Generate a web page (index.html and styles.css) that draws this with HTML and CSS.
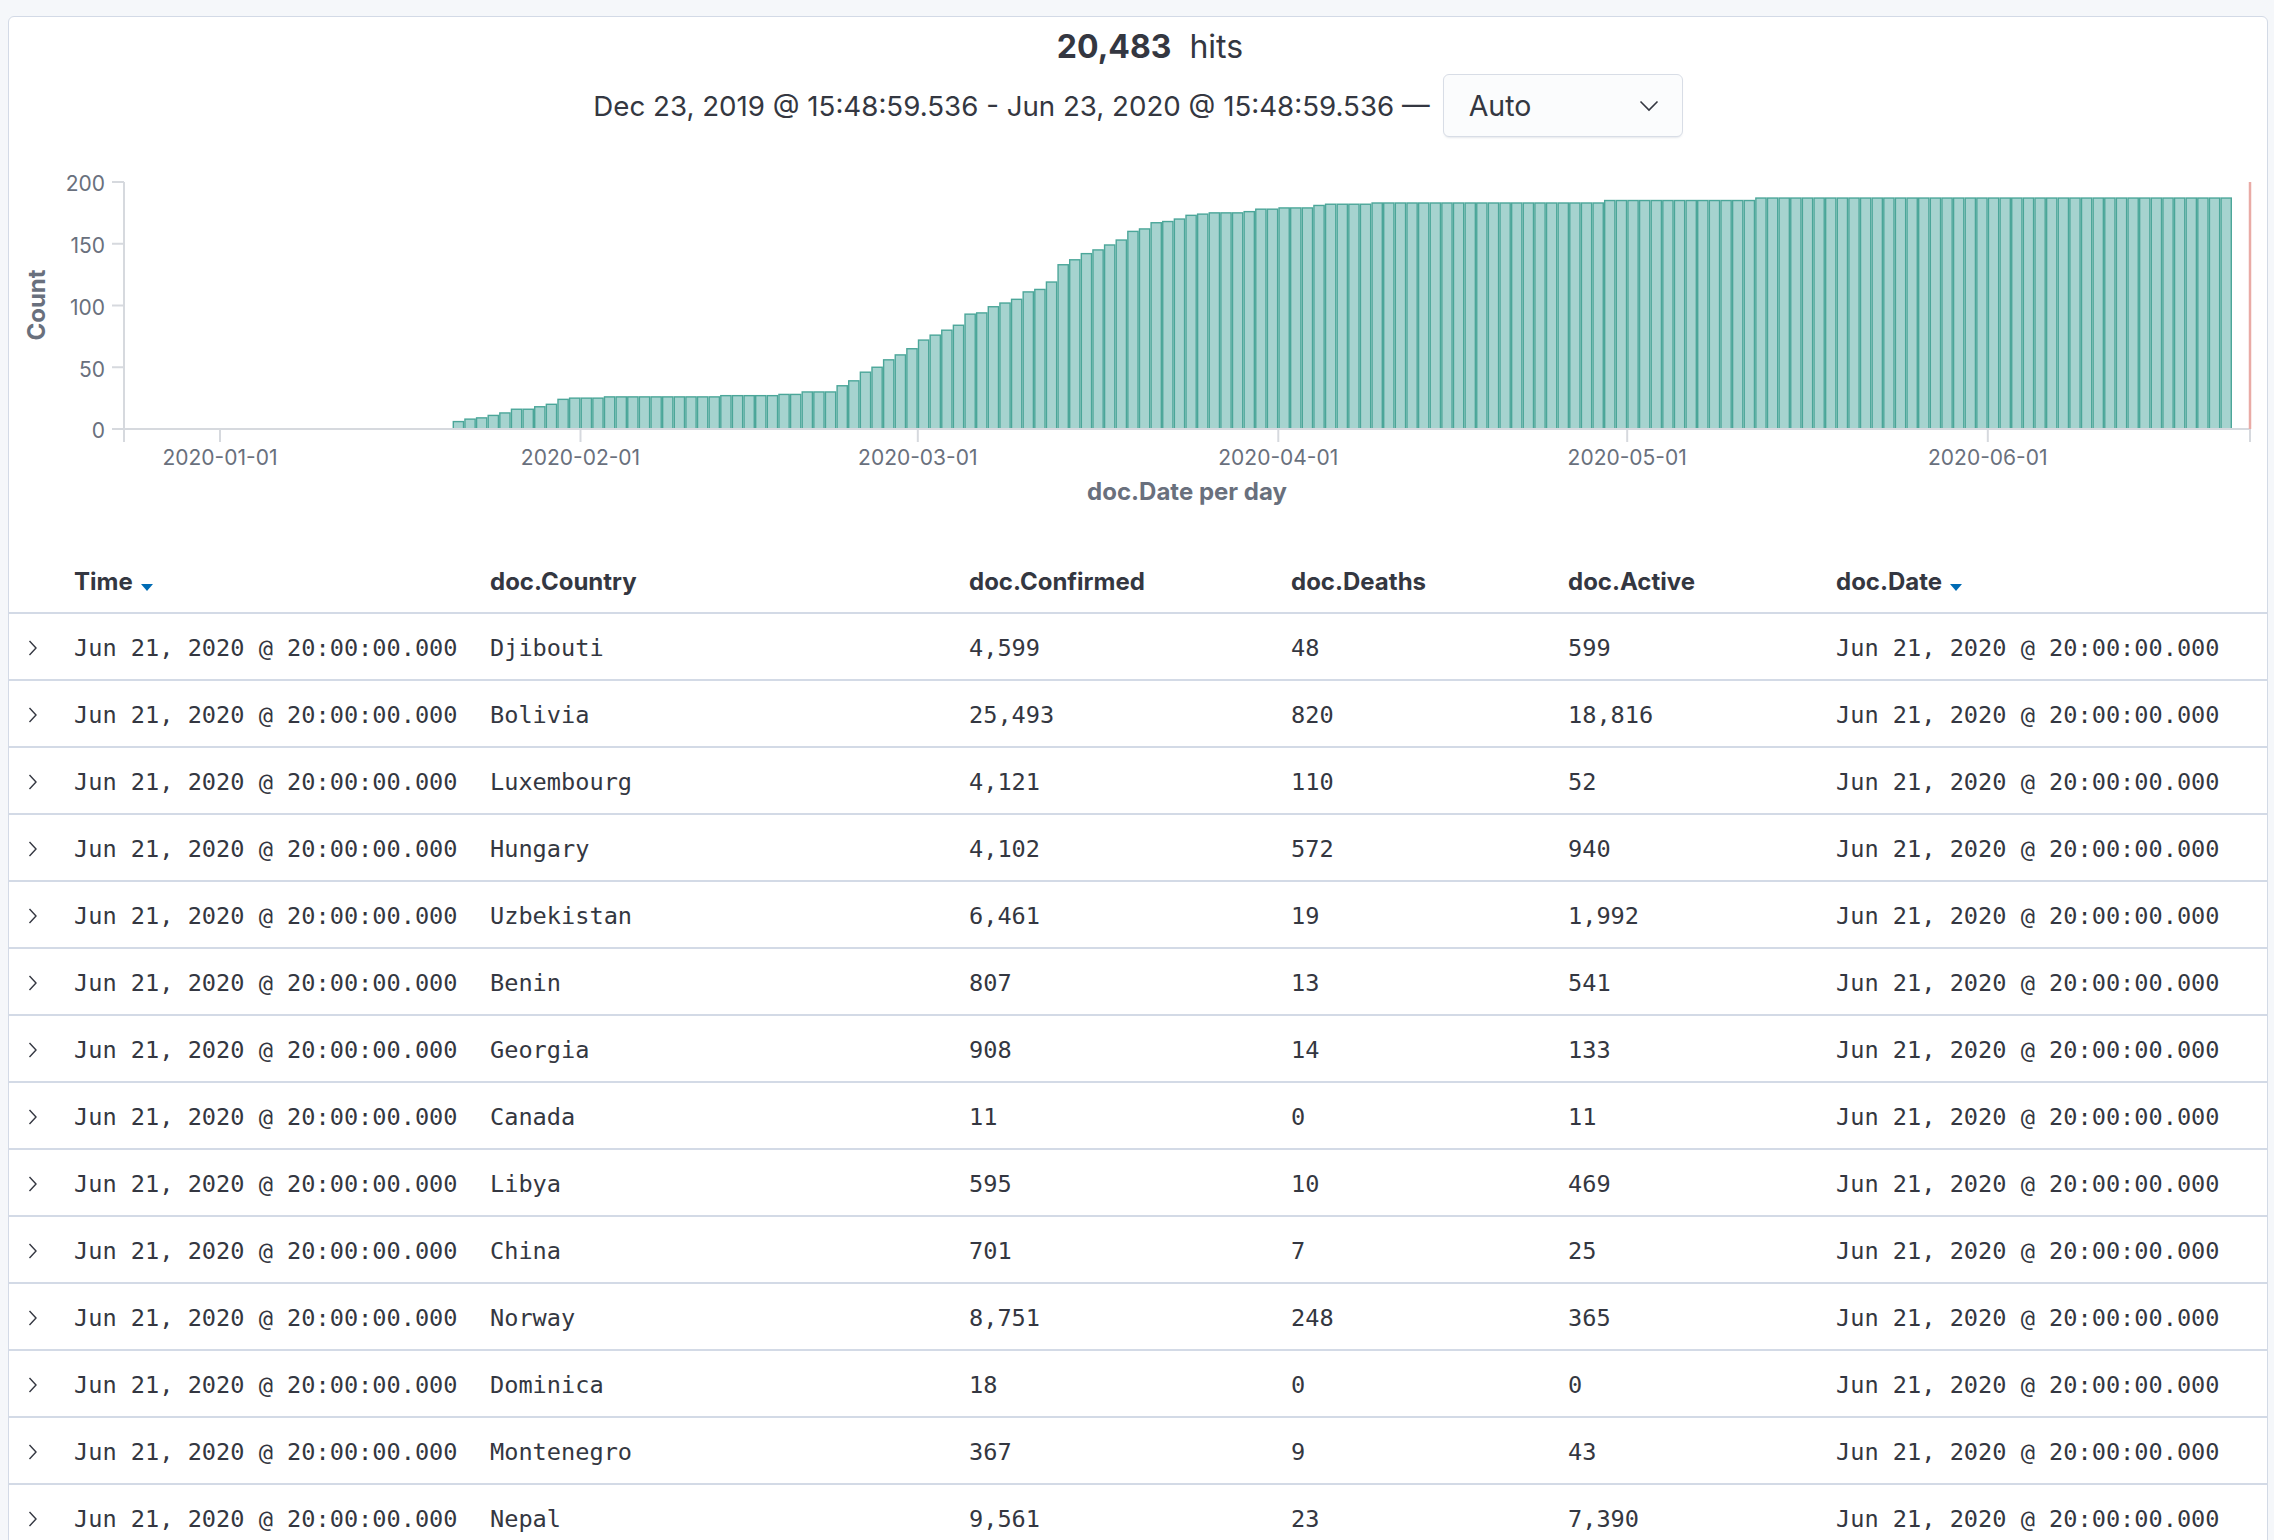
FILE: index.html
```html
<!DOCTYPE html>
<html>
<head>
<meta charset="utf-8">
<link rel="stylesheet" href="styles.css">
</head>
<body>
<div class="panel">
  <div class="hits"><strong class="hits-count">20,483</strong><span class="hits-label">hits</span></div>
  <div class="range">
    <span class="range-text">Dec 23, 2019 @ 15:48:59.536 - Jun 23, 2020 @ 15:48:59.536 —</span>
    <div class="select">
      <span class="select-value">Auto</span>
      <svg class="select-arrow" width="20" height="12" viewBox="0 0 20 12"><polyline points="1.5,1.5 10,10 18.5,1.5" fill="none" stroke="#343741" stroke-width="1.6"/></svg>
    </div>
  </div>
  <svg class="chart" width="2258" height="370" viewBox="9 150 2258 370">
    <g id="bars"></g>
    <g class="axis">
      <line x1="124" y1="182" x2="124" y2="442"/>
      <line x1="123" y1="429" x2="2251" y2="429"/>
      <line x1="112" y1="182" x2="124" y2="182"/>
      <line x1="112" y1="243.75" x2="124" y2="243.75"/>
      <line x1="112" y1="305.5" x2="124" y2="305.5"/>
      <line x1="112" y1="367.25" x2="124" y2="367.25"/>
      <line x1="112" y1="429" x2="124" y2="429"/>
      <line x1="220" y1="429" x2="220" y2="442"/>
      <line x1="580.5" y1="429" x2="580.5" y2="442"/>
      <line x1="917.8" y1="429" x2="917.8" y2="442"/>
      <line x1="1278.3" y1="429" x2="1278.3" y2="442"/>
      <line x1="1627.2" y1="429" x2="1627.2" y2="442"/>
      <line x1="1987.8" y1="429" x2="1987.8" y2="442"/>
      <line x1="2250" y1="429" x2="2250" y2="442"/>
    </g>
    <line class="now" x1="2250" y1="182" x2="2250" y2="429"/>
    <g class="ylabels">
      <text x="105" y="183">200</text>
      <text x="105" y="245">150</text>
      <text x="105" y="307">100</text>
      <text x="105" y="369">50</text>
      <text x="105" y="430.5">0</text>
    </g>
    <g class="xlabels">
      <text x="220" y="457">2020-01-01</text>
      <text x="580.5" y="457">2020-02-01</text>
      <text x="917.8" y="457">2020-03-01</text>
      <text x="1278.3" y="457">2020-04-01</text>
      <text x="1627.2" y="457">2020-05-01</text>
      <text x="1987.8" y="457">2020-06-01</text>
    </g>
    <text class="axis-title" x="36" y="305" transform="rotate(-90 36 305)">Count</text>
    <text class="axis-title" x="1187" y="491">doc.Date per day</text>
  </svg>
  <div class="table">
    <div class="row head">
      <div class="cell"></div>
      <div class="cell">Time<span class="sort"></span></div>
      <div class="cell">doc.Country</div>
      <div class="cell">doc.Confirmed</div>
      <div class="cell">doc.Deaths</div>
      <div class="cell">doc.Active</div>
      <div class="cell">doc.Date<span class="sort"></span></div>
    </div>
    <div class="row"><div class="cell toggle"><svg width="10" height="16" viewBox="0 0 10 16"><polyline points="1.5,1 8,8 1.5,15"/></svg></div><div class="cell">Jun 21, 2020 @ 20:00:00.000</div><div class="cell">Djibouti</div><div class="cell">4,599</div><div class="cell">48</div><div class="cell">599</div><div class="cell">Jun 21, 2020 @ 20:00:00.000</div></div>
    <div class="row"><div class="cell toggle"><svg width="10" height="16" viewBox="0 0 10 16"><polyline points="1.5,1 8,8 1.5,15"/></svg></div><div class="cell">Jun 21, 2020 @ 20:00:00.000</div><div class="cell">Bolivia</div><div class="cell">25,493</div><div class="cell">820</div><div class="cell">18,816</div><div class="cell">Jun 21, 2020 @ 20:00:00.000</div></div>
    <div class="row"><div class="cell toggle"><svg width="10" height="16" viewBox="0 0 10 16"><polyline points="1.5,1 8,8 1.5,15"/></svg></div><div class="cell">Jun 21, 2020 @ 20:00:00.000</div><div class="cell">Luxembourg</div><div class="cell">4,121</div><div class="cell">110</div><div class="cell">52</div><div class="cell">Jun 21, 2020 @ 20:00:00.000</div></div>
    <div class="row"><div class="cell toggle"><svg width="10" height="16" viewBox="0 0 10 16"><polyline points="1.5,1 8,8 1.5,15"/></svg></div><div class="cell">Jun 21, 2020 @ 20:00:00.000</div><div class="cell">Hungary</div><div class="cell">4,102</div><div class="cell">572</div><div class="cell">940</div><div class="cell">Jun 21, 2020 @ 20:00:00.000</div></div>
    <div class="row"><div class="cell toggle"><svg width="10" height="16" viewBox="0 0 10 16"><polyline points="1.5,1 8,8 1.5,15"/></svg></div><div class="cell">Jun 21, 2020 @ 20:00:00.000</div><div class="cell">Uzbekistan</div><div class="cell">6,461</div><div class="cell">19</div><div class="cell">1,992</div><div class="cell">Jun 21, 2020 @ 20:00:00.000</div></div>
    <div class="row"><div class="cell toggle"><svg width="10" height="16" viewBox="0 0 10 16"><polyline points="1.5,1 8,8 1.5,15"/></svg></div><div class="cell">Jun 21, 2020 @ 20:00:00.000</div><div class="cell">Benin</div><div class="cell">807</div><div class="cell">13</div><div class="cell">541</div><div class="cell">Jun 21, 2020 @ 20:00:00.000</div></div>
    <div class="row"><div class="cell toggle"><svg width="10" height="16" viewBox="0 0 10 16"><polyline points="1.5,1 8,8 1.5,15"/></svg></div><div class="cell">Jun 21, 2020 @ 20:00:00.000</div><div class="cell">Georgia</div><div class="cell">908</div><div class="cell">14</div><div class="cell">133</div><div class="cell">Jun 21, 2020 @ 20:00:00.000</div></div>
    <div class="row"><div class="cell toggle"><svg width="10" height="16" viewBox="0 0 10 16"><polyline points="1.5,1 8,8 1.5,15"/></svg></div><div class="cell">Jun 21, 2020 @ 20:00:00.000</div><div class="cell">Canada</div><div class="cell">11</div><div class="cell">0</div><div class="cell">11</div><div class="cell">Jun 21, 2020 @ 20:00:00.000</div></div>
    <div class="row"><div class="cell toggle"><svg width="10" height="16" viewBox="0 0 10 16"><polyline points="1.5,1 8,8 1.5,15"/></svg></div><div class="cell">Jun 21, 2020 @ 20:00:00.000</div><div class="cell">Libya</div><div class="cell">595</div><div class="cell">10</div><div class="cell">469</div><div class="cell">Jun 21, 2020 @ 20:00:00.000</div></div>
    <div class="row"><div class="cell toggle"><svg width="10" height="16" viewBox="0 0 10 16"><polyline points="1.5,1 8,8 1.5,15"/></svg></div><div class="cell">Jun 21, 2020 @ 20:00:00.000</div><div class="cell">China</div><div class="cell">701</div><div class="cell">7</div><div class="cell">25</div><div class="cell">Jun 21, 2020 @ 20:00:00.000</div></div>
    <div class="row"><div class="cell toggle"><svg width="10" height="16" viewBox="0 0 10 16"><polyline points="1.5,1 8,8 1.5,15"/></svg></div><div class="cell">Jun 21, 2020 @ 20:00:00.000</div><div class="cell">Norway</div><div class="cell">8,751</div><div class="cell">248</div><div class="cell">365</div><div class="cell">Jun 21, 2020 @ 20:00:00.000</div></div>
    <div class="row"><div class="cell toggle"><svg width="10" height="16" viewBox="0 0 10 16"><polyline points="1.5,1 8,8 1.5,15"/></svg></div><div class="cell">Jun 21, 2020 @ 20:00:00.000</div><div class="cell">Dominica</div><div class="cell">18</div><div class="cell">0</div><div class="cell">0</div><div class="cell">Jun 21, 2020 @ 20:00:00.000</div></div>
    <div class="row"><div class="cell toggle"><svg width="10" height="16" viewBox="0 0 10 16"><polyline points="1.5,1 8,8 1.5,15"/></svg></div><div class="cell">Jun 21, 2020 @ 20:00:00.000</div><div class="cell">Montenegro</div><div class="cell">367</div><div class="cell">9</div><div class="cell">43</div><div class="cell">Jun 21, 2020 @ 20:00:00.000</div></div>
    <div class="row"><div class="cell toggle"><svg width="10" height="16" viewBox="0 0 10 16"><polyline points="1.5,1 8,8 1.5,15"/></svg></div><div class="cell">Jun 21, 2020 @ 20:00:00.000</div><div class="cell">Nepal</div><div class="cell">9,561</div><div class="cell">23</div><div class="cell">7,390</div><div class="cell">Jun 21, 2020 @ 20:00:00.000</div></div>
  </div>
</div>
<script src="script.js"></script>
</body>
</html>
```

FILE: styles.css
```css
html, body {
  margin: 0;
  padding: 0;
  overflow: hidden;
  height: 100%;
}
body {
  background: #f5f7fa;
  padding: 16px 6px 0 8px;
  box-sizing: border-box;
  font-family: Inter, "Noto Sans", sans-serif;
  color: #343741;
}
.panel {
  background: #fff;
  border: 1px solid #d3dae6;
  border-radius: 6px;
  min-height: 1600px;
}
.hits {
  display: flex;
  justify-content: center;
  align-items: baseline;
  padding: 10px 0 0 24px;
  height: 40px;
  line-height: 40px;
  font-size: 32px;
}
.hits-count {
  font-weight: 700;
  color: #343741;
}
.hits-label {
  margin-left: 18px;
  font-weight: 400;
}
.range {
  display: flex;
  justify-content: center;
  align-items: center;
  gap: 13px;
  margin-top: 7px;
}
.range-text {
  font-size: 27.7px;
  color: #343741;
}
.select {
  box-sizing: border-box;
  width: 240px;
  height: 63px;
  display: flex;
  align-items: center;
  justify-content: space-between;
  padding: 0 23px 0 25px;
  background: #fbfcfd;
  border: 1px solid #d8dde6;
  border-radius: 6px;
  box-shadow: 0 2px 2px -1px rgba(152, 162, 179, 0.25);
}
.select-value {
  font-size: 28.5px;
}
.select-arrow {
  display: block;
}
.chart {
  display: block;
  margin-top: 13px;
}
.bar {
  fill: #a6d3cf;
  stroke: #4ba699;
  stroke-width: 1.4;
}
.axis line {
  stroke: #d6d9de;
  stroke-width: 2;
}
.now {
  stroke: #e9aba6;
  stroke-width: 2.5;
}
.ylabels text {
  font-family: Inter, sans-serif;
  font-size: 21px;
  fill: #69707d;
  text-anchor: end;
  dominant-baseline: central;
}
.xlabels text {
  font-family: Inter, sans-serif;
  font-size: 21px;
  fill: #69707d;
  text-anchor: middle;
  dominant-baseline: central;
}
.axis-title {
  font-family: Inter, sans-serif;
  font-size: 24px;
  font-weight: 700;
  fill: #69707d;
  text-anchor: middle;
  dominant-baseline: central;
}
.table {
  display: flex;
  flex-direction: column;
}
.row {
  display: grid;
  grid-template-columns: 65px 416px 479px 322px 277px 268px 1fr;
  height: 67px;
  box-sizing: border-box;
  padding-top: 3px;
  border-bottom: 2px solid #d3dae6;
  align-items: center;
  font-family: "DejaVu Sans Mono", monospace;
  font-size: 23.6px;
  color: #343741;
}
.row.head {
  height: 94px;
  padding-top: 0;
  align-items: end;
  padding-bottom: 15px;
  font-family: Inter, sans-serif;
  font-size: 24px;
  font-weight: 700;
  line-height: 30px;
}
.cell {
  white-space: nowrap;
  display: flex;
  align-items: center;
}
.toggle {
  justify-content: flex-start;
  padding-left: 19px;
}
.toggle svg polyline {
  fill: none;
  stroke: #343741;
  stroke-width: 1.4;
}
.sort {
  display: inline-block;
  width: 0;
  height: 0;
  margin-left: 8px;
  margin-top: 10px;
  border-left: 6px solid transparent;
  border-right: 6px solid transparent;
  border-top: 7px solid #006bb4;
}
```

FILE: script.js
```js
(function () {
  var A = [6,8,9,11,13,16,16,18,20,24,25,25,25,26,26,26,26,26,26,26,26,26,26,27,27,27,27,27,28,28,30,30,30,35,39,46,50,56,60,65,72,76,80,84,93,94,99,102,105,111,113];
  var B = [119,133,137,142,145,149,153,160,162,167,168,170,173,174,175,175,175,176,178,178,179,179,179,181,182,182,182,182];
  var vals = A.concat(B);
  var i;
  for (i = 0; i < 20; i++) vals.push(183);
  for (i = 0; i < 13; i++) vals.push(185);
  for (i = 0; i < 41; i++) vals.push(187);
  var g = document.getElementById('bars');
  var NS = 'http://www.w3.org/2000/svg';
  vals.forEach(function (v, idx) {
    var d = 20 + idx;
    var x0 = 220 + d * 11.63;
    var top = 429 - v * 1.235;
    var r = document.createElementNS(NS, 'rect');
    r.setAttribute('x', (x0 + 0.7).toFixed(2));
    r.setAttribute('y', top.toFixed(2));
    r.setAttribute('width', '10.23');
    r.setAttribute('height', (429 - top).toFixed(2));
    r.setAttribute('class', 'bar');
    g.appendChild(r);
  });
})();
```
